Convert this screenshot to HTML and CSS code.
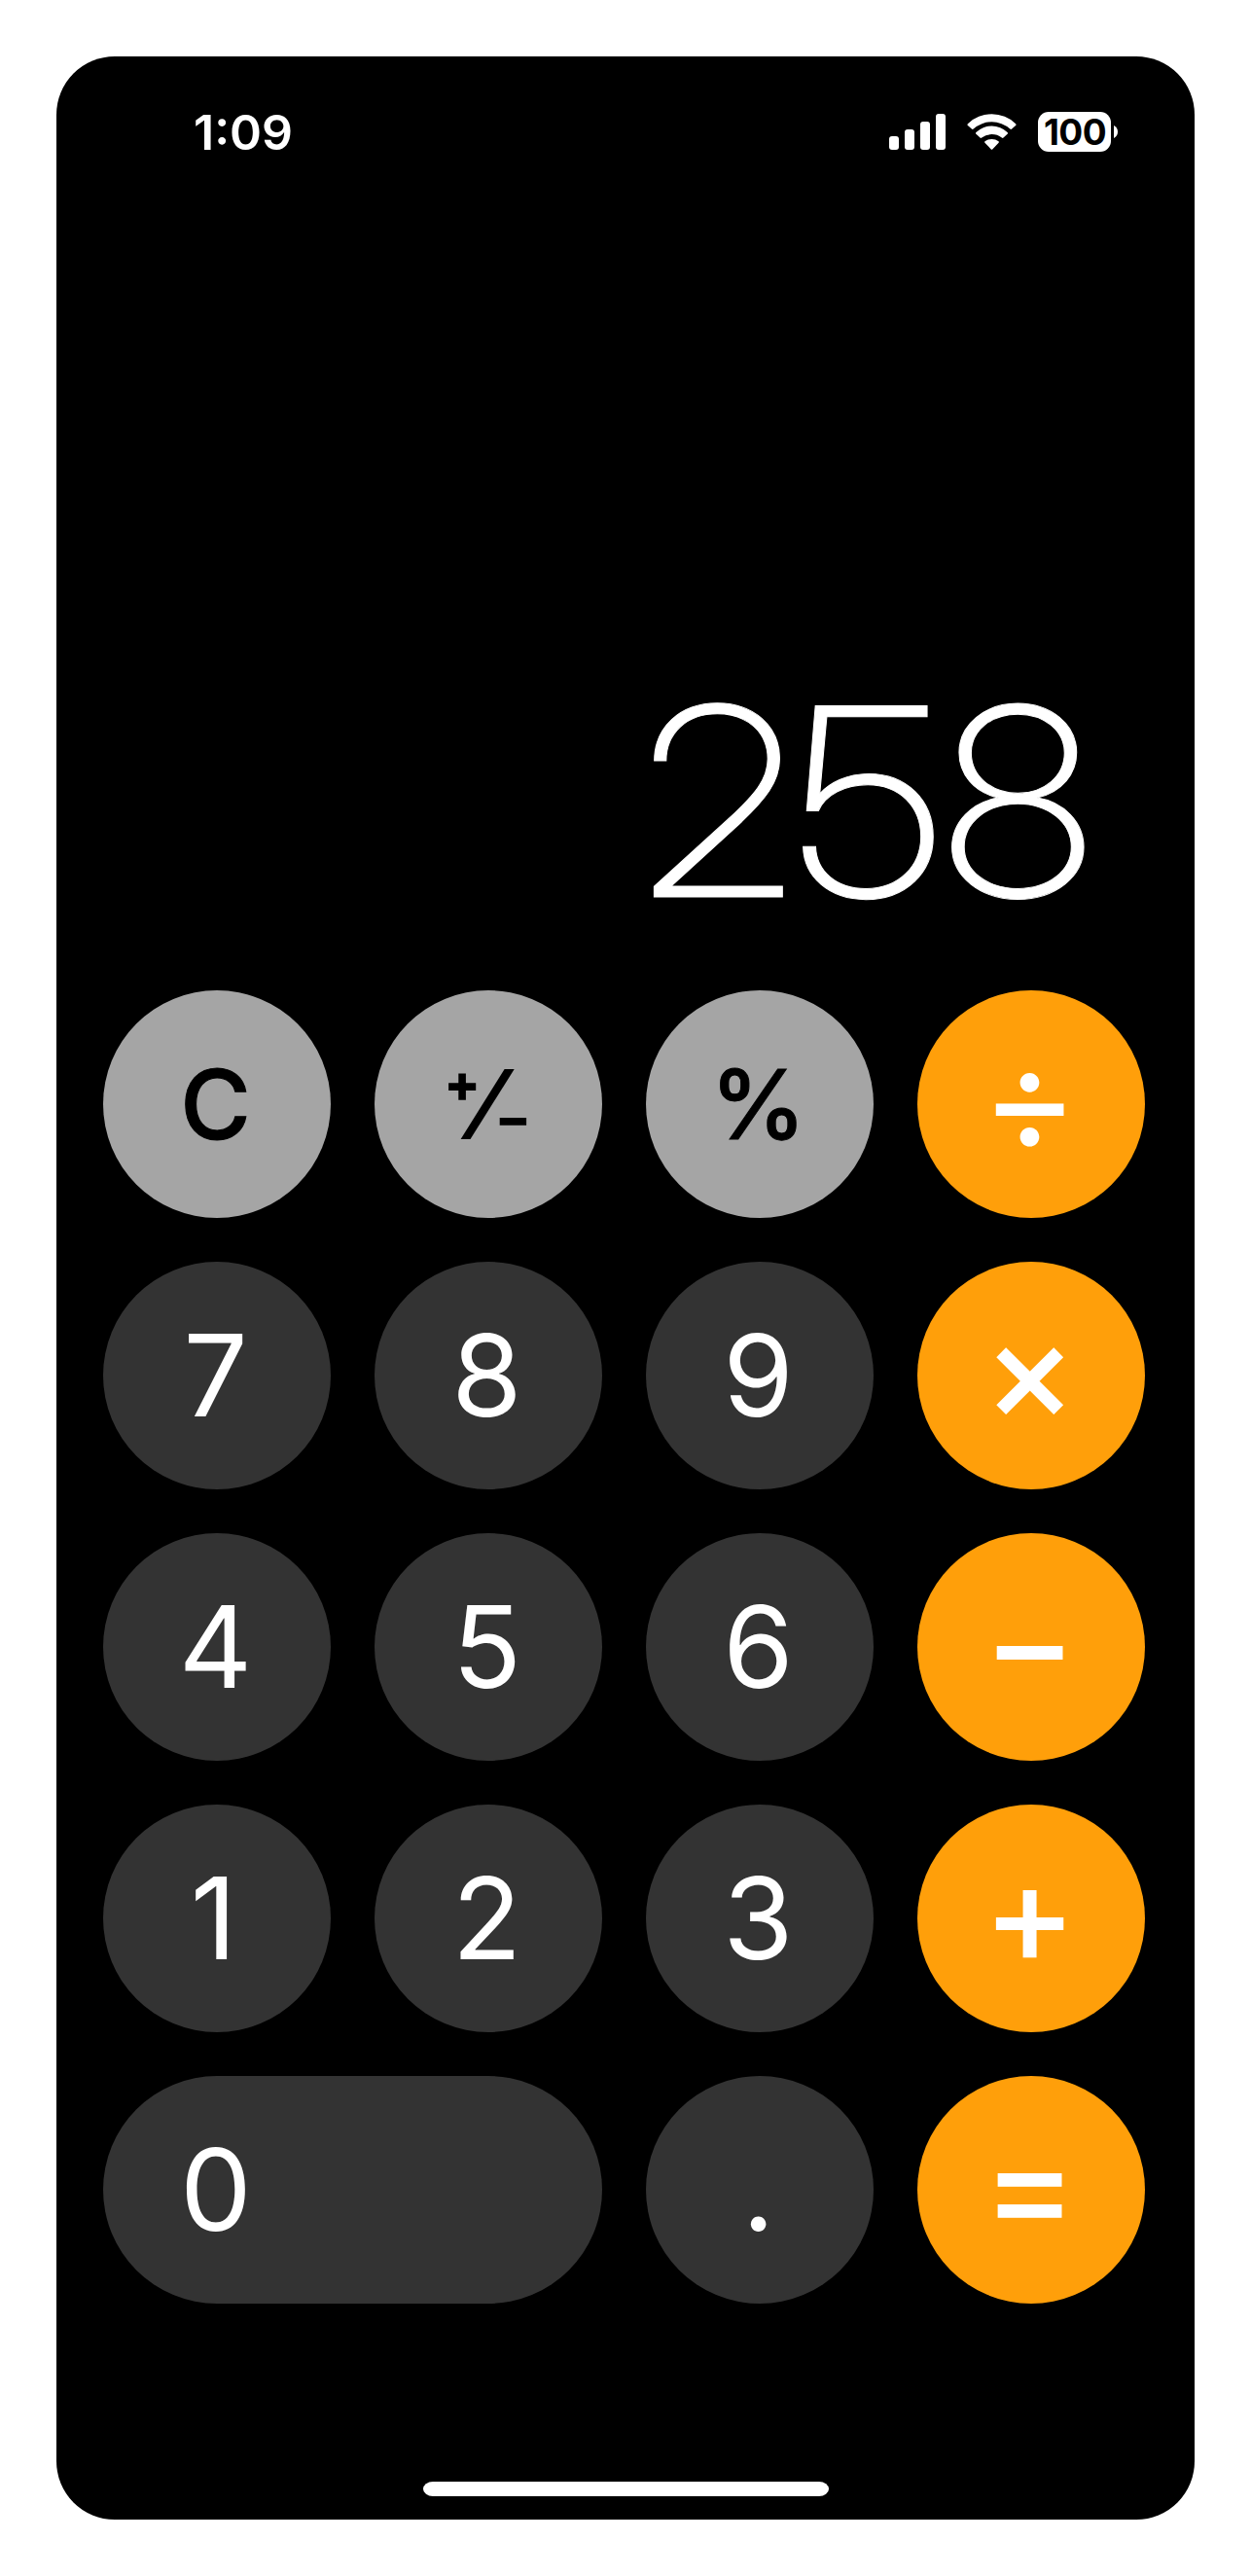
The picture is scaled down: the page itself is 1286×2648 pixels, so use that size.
FILE: index.html
```html
<!DOCTYPE html>
<html lang="en">
    <head>
        <meta charset="UTF-8">
        <title>Calculator</title>
        <link rel="stylesheet" href="styles.css">
    </head>
    <body>
        <div class="phone">
            <div class="status">
                <div class="time">1:09</div>
                <div class="status_icons">
                    <svg class="signal" viewBox="0 0 58 37">
                        <rect x="0" y="23" width="10" height="14" rx="3"/>
                        <rect x="16" y="16" width="10" height="21" rx="3"/>
                        <rect x="32" y="8" width="10" height="29" rx="3"/>
                        <rect x="48" y="0" width="10" height="37" rx="3"/>
                    </svg>
                    <svg class="wifi" viewBox="0 0 51 37">
                        <path d="M.9 10.2A35.5 35.5 0 0 1 50.1 10.2Q51 11.2 50.1 12.1L46.1 15.6Q45.3 16.3 44.3 15.5A28.2 28.2 0 0 0 6.7 15.5Q5.7 16.3 4.9 15.6L.9 12.1Q0 11.2 .9 10.2Z"/>
                        <path d="M9.4 19A23.2 23.2 0 0 1 41.6 19Q42.4 19.9 41.6 20.8L37.5 24.6Q36.7 25.3 35.8 24.5A17.4 17.4 0 0 0 15.2 24.5Q14.3 25.3 13.5 24.6L9.4 20.8Q8.6 19.9 9.4 19Z"/>
                        <path d="M18.5 28.3A11.5 11.5 0 0 1 32.5 28.3Q33.3 29.1 32.6 29.8L26.2 36.4Q25.5 37 24.8 36.4L18.4 29.8Q17.7 29.1 18.5 28.3Z"/>
                    </svg>
                    <div class="battery">
                        <div class="battery_level">100</div>
                        <svg class="battery_tip" viewBox="0 0 4 13">
                            <path d="M0 0Q4 2.3 4 6.5T0 13Z"/>
                        </svg>
                    </div>
                </div>
            </div>

            <div class="display">258</div>

            <div class="keys">
                <div class="key grey">C</div>
                <div class="key grey sign">
                    <svg viewBox="0 0 82 72">
                        <path d="M2.1 18.1H30.2M16.1 4.4V31.7M54.7 53.9H82.1" stroke="#000" stroke-width="7.6"/>
                        <path d="M59.6 0H69.7L24.5 72H14.6Z"/>
                    </svg>
                </div>
                <div class="key grey">%</div>
                <div class="key orange divide">÷</div>

                <div class="key">7</div>
                <div class="key">8</div>
                <div class="key">9</div>
                <div class="key orange">×</div>

                <div class="key">4</div>
                <div class="key">5</div>
                <div class="key">6</div>
                <div class="key orange">−</div>

                <div class="key one">1</div>
                <div class="key">2</div>
                <div class="key">3</div>
                <div class="key orange">+</div>

                <div class="key zero">0</div>
                <div class="key">.</div>
                <div class="key orange">=</div>
            </div>

            <div class="home_bar"></div>
        </div>
    </body>
</html>
```
FILE: styles.css
```css
*{
    box-sizing: border-box;
}

body{
    margin: 0;
    padding: 58px;
    background-color: white;
    font-family: Inter, "Liberation Sans", sans-serif;
}

.phone{
    display: flex;
    flex-direction: column;
    width: 1170px;
    height: 2532px;
    border-radius: 60px;
    background-color: black;
    color: white;
}

.status{
    display: flex;
    justify-content: space-between;
    padding: 48px 79px 0 141px;
}

.time{
    height: 60px;
    line-height: 60px;
    font-size: 50px;
    font-weight: 600;
}

.status_icons{
    display: flex;
    align-items: flex-start;
    height: 60px;
    padding-top: 9px;
}

.status_icons svg{
    fill: white;
}

.signal{
    width: 58px;
    height: 37px;
    margin: 2px 22px 0 0;
}

.wifi{
    width: 51px;
    height: 37px;
    margin: 2px 22px 0 0;
}

.battery{
    display: flex;
    align-items: center;
    gap: 3px;
}

.battery_level{
    width: 75px;
    height: 41px;
    padding-left: 1px;
    border-radius: 11px;
    background-color: white;
    color: black;
    font-size: 37px;
    font-weight: 700;
    letter-spacing: -0.6px;
    line-height: 41px;
    text-align: center;
}

.battery_tip{
    width: 4px;
    height: 13px;
}

.display{
    height: 852px;
    padding: 494px 98px 0 0;
    font-family: "Inter Display", Inter, "Liberation Sans", sans-serif;
    font-size: 270px;
    font-weight: 200;
    font-variation-settings: "opsz" 32;
    letter-spacing: -1px;
    line-height: 327px;
    text-align: right;
    transform: scaleX(1.07);
    transform-origin: right;
    -webkit-text-stroke: 1px white;
}

.keys{
    display: grid;
    grid-template-columns: repeat(4, 234px);
    grid-auto-rows: 234px;
    gap: 45px;
    padding-left: 48px;
}

.key{
    display: flex;
    align-items: center;
    justify-content: center;
    padding: 0 3px 2px 0;
    border-radius: 117px;
    background-color: #333333;
    font-size: 117px;
}

.grey{
    padding-bottom: 1px;
    background-color: #a5a5a5;
    color: black;
    font-size: 99px;
    font-weight: 500;
    -webkit-text-stroke: 1px black;
}

.orange{
    padding-bottom: 12px;
    background-color: #ff9f0a;
    font-size: 144px;
    font-weight: 500;
}

.divide{
    padding-bottom: 13px;
    font-size: 152px;
    font-weight: 400;
}

.one{
    padding-right: 7px;
}

.zero{
    grid-column: span 2;
    justify-content: flex-start;
    padding-left: 79px;
}

.sign{
    padding: 0 4px 0 0;
}

.sign svg{
    width: 82px;
    height: 72px;
    overflow: visible;
}

.home_bar{
    width: 417px;
    height: 15px;
    margin: auto auto 24px 377px;
    border-radius: 10px / 7.5px;
    background-color: white;
}
```
